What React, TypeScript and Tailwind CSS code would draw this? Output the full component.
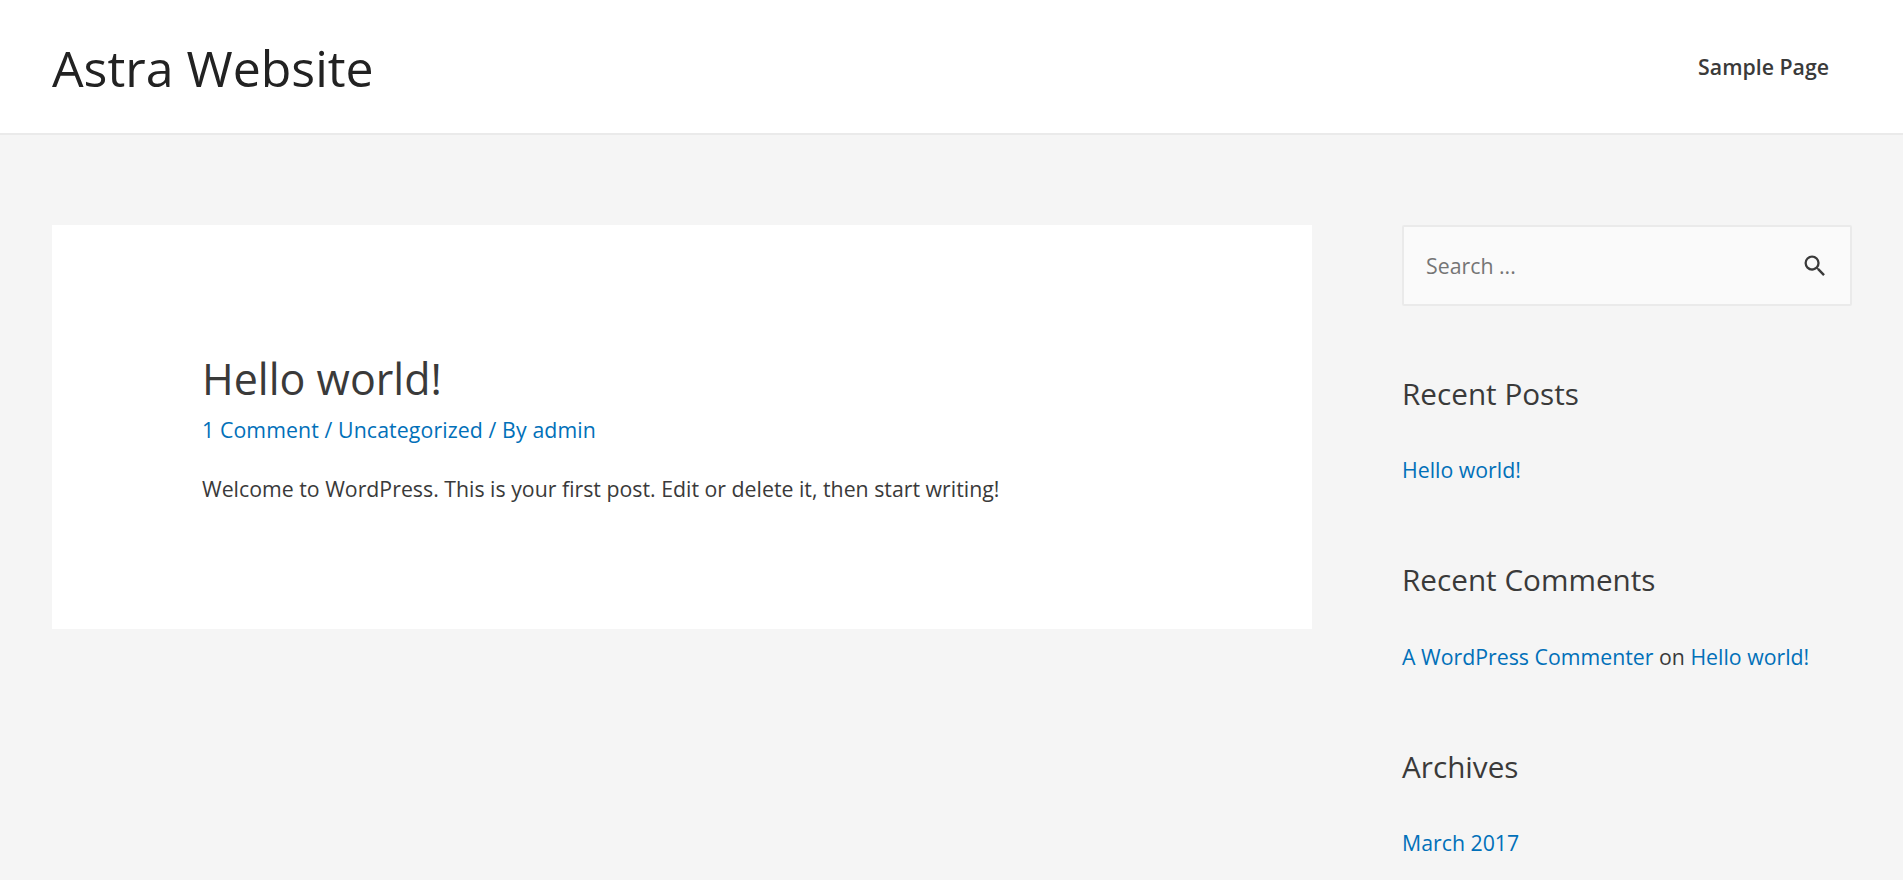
import React from 'react';

const font = "font-['Open_Sans',sans-serif]";

function WidgetTitle({ children }: { children: React.ReactNode }) {
  return <h2 className="text-[29.7px] leading-[40px] font-normal text-[#3a3a3a]">{children}</h2>;
}

function Link({ children }: { children: React.ReactNode }) {
  return <a href="#" className="text-[#0170b9]">{children}</a>;
}

export default function App() {
  return (
    <div className={`h-[880px] overflow-hidden bg-[#f5f5f5] text-[21.3px] text-[#3a3a3a] ${font}`}>
      <header className="flex h-[135px] items-center justify-between border-b-2 border-[#eaeaea] bg-white pl-[52px] pr-[74px]">
        <a href="#" className="mt-[3px] text-[50px] leading-[70px] font-normal text-[#222222]">Astra Website</a>
        <a href="#" className="text-[21.3px] font-semibold text-[#3a3a3a]">Sample Page</a>
      </header>

      <div className="flex items-start gap-[90px] pl-[52px] pr-[51px] pt-[90px]">
        <main className="h-[404px] w-[1260px] shrink-0 bg-white px-[150px] pt-[126px]">
          <h1 className="text-[43px] leading-[56px] font-normal text-[#3a3a3a]">Hello world!</h1>
          <p className="mt-[8px] tracking-[0.1px] text-[#0170b9] leading-[30px]">1 Comment / Uncategorized / By admin</p>
          <p className="mt-[29px] leading-[30px]">Welcome to WordPress. This is your first post. Edit or delete it, then start writing!</p>
        </main>

        <aside className="w-[450px] shrink-0">
          <div className="flex h-[81px] items-center justify-between rounded-[2px] border-2 border-[#eaeaea] bg-[#fafafa] pl-[22px] pr-[21px]">
            <span className="text-[#757575]">Search ...</span>
            <svg width="28" height="28" viewBox="0 0 24 24" fill="#3a3a3a">
              <path d="M15.5 14h-.79l-.28-.27A6.471 6.471 0 0 0 16 9.5 6.5 6.5 0 1 0 9.5 16c1.61 0 3.09-.59 4.23-1.57l.27.28v.79l5 4.99L20.49 19l-4.99-5zm-6 0C7.01 14 5 11.99 5 9.5S7.01 5 9.5 5 14 7.01 14 9.5 11.99 14 9.5 14z" />
            </svg>
          </div>

          <section className="mt-[68px]">
            <WidgetTitle>Recent Posts</WidgetTitle>
            <p className="mt-[41px] leading-[30px]"><Link>Hello world!</Link></p>
          </section>
          <section className="mt-[75px]">
            <WidgetTitle>Recent Comments</WidgetTitle>
            <p className="mt-[42px] leading-[30px]"><Link>A WordPress Commenter</Link> on <Link>Hello world!</Link></p>
          </section>
          <section className="mt-[75px]">
            <WidgetTitle>Archives</WidgetTitle>
            <p className="mt-[41px] leading-[30px]"><Link>March 2017</Link></p>
          </section>
        </aside>
      </div>
    </div>
  );
}
